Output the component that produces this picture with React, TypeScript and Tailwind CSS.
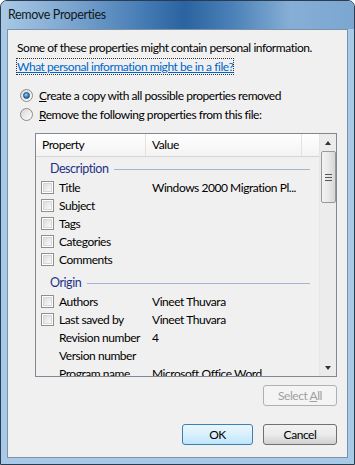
import React from 'react'

type Row = { label: string; value?: string; check?: boolean }

const description: Row[] = [
  { label: 'Title', value: 'Windows 2000 Migration Pl...', check: true },
  { label: 'Subject', check: true },
  { label: 'Tags', check: true },
  { label: 'Categories', check: true },
  { label: 'Comments', check: true },
]

const origin: Row[] = [
  { label: 'Authors', value: 'Vineet Thuvara', check: true },
  { label: 'Last saved by', value: 'Vineet Thuvara', check: true },
  { label: 'Revision number', value: '4' },
  { label: 'Version number' },
  { label: 'Program name', value: 'Microsoft Office Word' },
]

function Checkbox() {
  return (
    <div className="w-[13px] h-[13px] shrink-0 border border-[#8f8f8f] bg-white p-[1px]">
      <div className="w-full h-full border border-[#d6d6d6] bg-gradient-to-br from-[#dcdcdc] to-[#fbfbfb]" />
    </div>
  )
}

function Radio({ on }: { on?: boolean }) {
  return (
    <div className="w-[13px] h-[13px] shrink-0 rounded-full border border-[#8b8b8b] bg-gradient-to-br from-[#d8d8d8] to-[#fdfdfd] flex items-center justify-center">
      {on && (
        <div className="w-[7px] h-[7px] rounded-full border border-[#1a4f80] bg-[radial-gradient(circle_at_40%_35%,#9fd3f5,#2a78b8_60%,#104a80)]" />
      )}
    </div>
  )
}

function Group({ title, className = '' }: { title: string; className?: string }) {
  return (
    <div className={`h-[22px] flex items-center pl-[14px] pr-[9px] ${className}`}>
      <span className="text-[#1e3287] text-[12.5px] whitespace-nowrap">{title}</span>
      <div className="flex-1 h-px bg-[#a7b4d3] ml-[6px]" />
    </div>
  )
}

function PropRow({ r }: { r: Row }) {
  return (
    <div className="h-[18px] flex items-center">
      <div className="w-[23px] pl-[5px] flex items-center">{r.check && <Checkbox />}</div>
      <span className="w-[93px] whitespace-nowrap">{r.label}</span>
      <span className="whitespace-nowrap">{r.value}</span>
    </div>
  )
}

function Button({ children, kind }: { children: React.ReactNode; kind: 'ok' | 'normal' | 'disabled' }) {
  const style =
    kind === 'ok'
      ? 'border-[#3c7fb1] bg-gradient-to-b from-[#eaf6fd] via-[#d9f0fc] to-[#bee6fd] text-black'
      : kind === 'disabled'
        ? 'border-[#adb2b5] bg-[#f4f4f4] text-[#a0a0a0]'
        : 'border-[#707070] bg-gradient-to-b from-[#f2f2f2] via-[#ebebeb] to-[#d0d0d0] text-black'
  return (
    <div className={`h-[21px] rounded-[3px] border flex items-center justify-center ${style} ${kind === 'ok' ? 'w-[71px]' : 'w-[74px]'}`}>
      {children}
    </div>
  )
}

export default function App() {
  return (
    <div
      className="w-[355px] h-[465px] flex flex-col rounded-t-[7px] border border-[#2b3b50] bg-[#a9c9e8] text-[12px] tracking-[-0.45px] text-black overflow-hidden"
      style={{ fontFamily: 'Lato, "Liberation Sans", sans-serif' }}
    >
      <div className="h-[28px] shrink-0 flex items-center pl-[7px] bg-[linear-gradient(to_right,#a9c9e6_0%,#7ba5cf_20%,#4b80b8_38%,#2a63a0_52%,#4c82b8_66%,#86afd6_82%,#7aa6d0_100%)]">
        <span className="text-[12.5px] tracking-[-0.35px] text-[#101820]">Remove Properties</span>
      </div>
      <div className="flex-1 ml-[6px] mr-[6px] mb-[6px] border border-[#7d92a8] bg-[#f0f0f0] flex flex-col px-[9px] pt-[8px]">
        <div className="h-[19px] flex items-center whitespace-nowrap">Some of these properties might contain personal information.</div>
        <div className="h-[19px] flex items-center whitespace-nowrap">
          <span className="text-[#0066cc] underline outline-1 outline-dotted outline-[#333] leading-[15px]">
            What personal information might be in a file?
          </span>
        </div>
        <div className="h-[19px] mt-[10px] flex items-center gap-[6px] pl-[3px] whitespace-nowrap">
          <Radio on />
          <span>
            <span className="underline">C</span>reate a copy with all possible properties removed
          </span>
        </div>
        <div className="h-[19px] flex items-center gap-[6px] pl-[3px] whitespace-nowrap">
          <Radio />
          <span>
            <span className="underline">R</span>emove the following properties from this file:
          </span>
        </div>
        <div className="ml-[18px] mr-[1px] mt-[9px] h-[244px] shrink-0 border border-[#828790] bg-[#f0f0f0] flex overflow-hidden">
          <div className="flex-1 flex flex-col overflow-hidden">
            <div className="h-[23px] shrink-0 flex border-b border-[#d5d5d5] bg-gradient-to-b from-white to-[#f3f3f3]">
              <div className="w-[110px] pl-[6px] flex items-center border-r border-[#e2e2e2]">Property</div>
              <div className="w-[156px] pl-[6px] flex items-center border-r border-[#e2e2e2]">Value</div>
              <div className="flex-1" />
            </div>
            <Group title="Description" className="mt-[3px]" />
            {description.map((r) => (
              <PropRow key={r.label} r={r} />
            ))}
            <Group title="Origin" className="mt-[5px]" />
            {origin.map((r) => (
              <PropRow key={r.label} r={r} />
            ))}
          </div>
          <div className="w-[17px] shrink-0 bg-[#ececec] border-l border-[#e6e6e6] flex flex-col items-center">
            <div className="h-[17px] w-full flex items-center justify-center">
              <div className="w-0 h-0 border-l-[3px] border-r-[3px] border-b-[4px] border-l-transparent border-r-transparent border-b-[#333]" />
            </div>
            <div className="w-[15px] h-[52px] rounded-[2px] border border-[#989898] bg-gradient-to-r from-[#f3f3f3] via-[#e8e8e8] to-[#d6d6d6] flex flex-col items-center justify-center gap-[2px]">
              <div className="w-[7px] h-px bg-[#555]" />
              <div className="w-[7px] h-px bg-[#555]" />
              <div className="w-[7px] h-px bg-[#555]" />
            </div>
            <div className="flex-1" />
            <div className="h-[17px] w-full flex items-center justify-center">
              <div className="w-0 h-0 border-l-[3px] border-r-[3px] border-t-[4px] border-l-transparent border-r-transparent border-t-[#333]" />
            </div>
          </div>
        </div>
        <div className="flex justify-end mt-[8px] pr-[1px]">
          <Button kind="disabled">
            <span>
              Select <span className="underline">A</span>ll
            </span>
          </Button>
        </div>
        <div className="flex justify-end gap-[10px] mt-[18px] pr-[1px]">
          <Button kind="ok">OK</Button>
          <Button kind="normal">Cancel</Button>
        </div>
      </div>
    </div>
  )
}
